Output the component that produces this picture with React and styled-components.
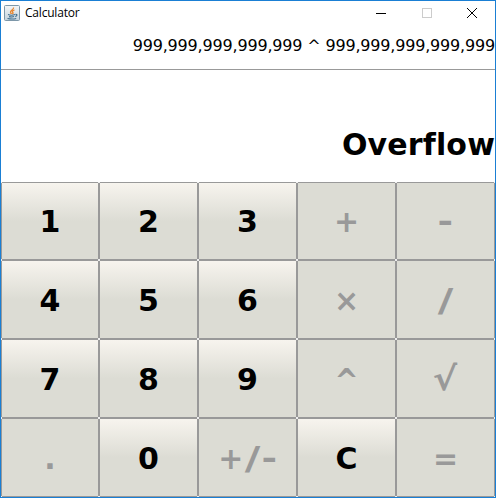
import React from 'react';
import styled, { createGlobalStyle } from 'styled-components';

const GlobalStyle = createGlobalStyle`
  * { box-sizing: border-box; }
  body { margin: 0; background: #fff; overflow: hidden; }
`;

const Window = styled.main`
  width: 496px;
  height: 498px;
  display: flex;
  flex-direction: column;
  background: #fff;
  border: 1px solid #1a7fd4;
  font-family: 'DejaVu Sans', Verdana, sans-serif;
  color: #000;
`;

const TitleBar = styled.header`
  height: 29px;
  flex: none;
  display: flex;
  align-items: flex-start;
  padding: 4px 0 0 3px;
`;

const Title = styled.h1`
  margin: 0 auto 0 5px;
  font: 400 12px/16px 'Open Sans', 'Noto Sans', sans-serif;
  letter-spacing: -0.2px;
`;

const Controls = styled.div`
  display: flex;
  margin-top: -4px;
`;

const WindowButton = styled.button`
  width: 45.5px;
  height: 24px;
  padding: 0;
  border: 0;
  background: none;
  display: grid;
  place-items: center;
  color: ${({ disabled }) => (disabled ? '#ccc' : '#000')};
  svg { display: block; }
`;

const Expression = styled.div`
  height: 40px;
  flex: none;
  border-bottom: 1px solid #999;
  font-size: 16px;
  line-height: 32px;
  letter-spacing: -0.18px;
  text-align: right;
  white-space: pre;
`;

const Result = styled.output`
  height: 112px;
  flex: none;
  display: block;
  padding-top: 57px;
  text-align: right;
  font-size: 30px;
  font-weight: 700;
  line-height: 36px;
  letter-spacing: 0.15px;
  font-variant-ligatures: none;
`;

const Keypad = styled.div`
  display: grid;
  grid-template-columns: 98px repeat(4, 99px);
  grid-template-rows: 78px repeat(3, 79px);
`;

const Key = styled.button`
  position: relative;
  display: flex;
  align-items: center;
  justify-content: center;
  padding: 2px 0 0;
  margin: 0;
  border: 1px solid #999;
  border-radius: 0;
  background: ${({ disabled }) =>
    disabled ? '#dcdcd4' : 'linear-gradient(#f7f4ee, #dcdcd4 50%, #dcdcd4)'};
  color: ${({ disabled }) => (disabled ? '#999' : '#000')};
  font: 700 30px/36px 'DejaVu Sans', Verdana, sans-serif;

  &::after {
    content: '';
    position: absolute;
    inset: -1px;
    --dot: linear-gradient(#eee, #eee);
    background: var(--dot) 0 0, var(--dot) 100% 0, var(--dot) 0 100%, var(--dot) 100% 100%;
    background-size: 1px 1px;
    background-repeat: no-repeat;
  }
`;

const Glyph = styled.span`
  display: inline-block;
  margin: 0 ${({ $gap = 0 }) => $gap}px;
  transform: ${({ $shift = 0, $sx = 1, $sy = 1 }) => `translateY(${$shift}px) scale(${$sx}, ${$sy})`};
`;

const SHAPES = {
  '/': { $sx: 1.42, $sy: 1.04, $gap: 4 },
  '-': { $sx: 1.25, $gap: 1 },
  '^': { $sx: 0.96, $sy: 1.08, $shift: 1 },
  '√': { $sx: 1.22, $sy: 1.1, $shift: -1 },
  '×': { $shift: 0 },
};

const KEYS = [
  ['1'], ['2'], ['3'], ['+', true], ['-', true],
  ['4'], ['5'], ['6'], ['×', true], ['/', true],
  ['7'], ['8'], ['9'], ['^', true], ['√', true],
  ['.', true], ['0'], ['+/-', true], ['C'], ['=', true],
];

const JavaIcon = () => (
  <svg width="16" height="16" viewBox="0 0 16 16" fill="none">
    <defs>
      <linearGradient id="tile" x1="0" y1="0" x2="0" y2="1">
        <stop offset="0" stopColor="#f4f6f7" />
        <stop offset="1" stopColor="#c4d2dc" />
      </linearGradient>
    </defs>
    <rect x=".5" y=".5" width="15" height="15" rx="1" fill="url(#tile)" stroke="#7d97a9" />
    <path d="M9.5 2.5C10 5 6 5 6.5 7.5C6.8 8.5 7.5 8.5 7.5 9M10.5 5C8 6 8 6.8 8.8 7.5C9.3 8.2 8.8 8.7 8.3 9" stroke="#e8842c" strokeWidth="1.3" />
    <path d="M4 9.6C6 10.4 9 10.4 11 9.6M5 11.6C7 12.1 8.8 12.1 10 11.6M3.5 13.5C6.5 14.1 10 14.1 12.2 13.4M11.5 9.4C13.7 9.2 13.3 11 11.3 11.6" stroke="#42708f" strokeWidth="1.1" />
  </svg>
);

export default function App() {
  return (
    <>
      <GlobalStyle />
      <Window>
        <TitleBar>
          <JavaIcon />
          <Title>Calculator</Title>
          <Controls>
            <WindowButton aria-label="Minimize">
              <svg width="10" height="10"><path d="M0 5.5H10" stroke="currentColor" /></svg>
            </WindowButton>
            <WindowButton aria-label="Maximize" disabled>
              <svg width="10" height="10"><rect x=".5" y=".5" width="9" height="9" fill="none" stroke="currentColor" /></svg>
            </WindowButton>
            <WindowButton aria-label="Close">
              <svg width="10" height="10"><path d="M0 0L10 10M10 0L0 10" stroke="currentColor" /></svg>
            </WindowButton>
          </Controls>
        </TitleBar>
        <Expression>999,999,999,999,999 ^ 999,999,999,999,999</Expression>
        <Result>Overflow</Result>
        <Keypad>
          {KEYS.map(([label, disabled]) => (
            <Key key={label} disabled={disabled}>
              {[...label].map((char) => (
                <Glyph key={char} {...SHAPES[char]}>{char}</Glyph>
              ))}
            </Key>
          ))}
        </Keypad>
      </Window>
    </>
  );
}
